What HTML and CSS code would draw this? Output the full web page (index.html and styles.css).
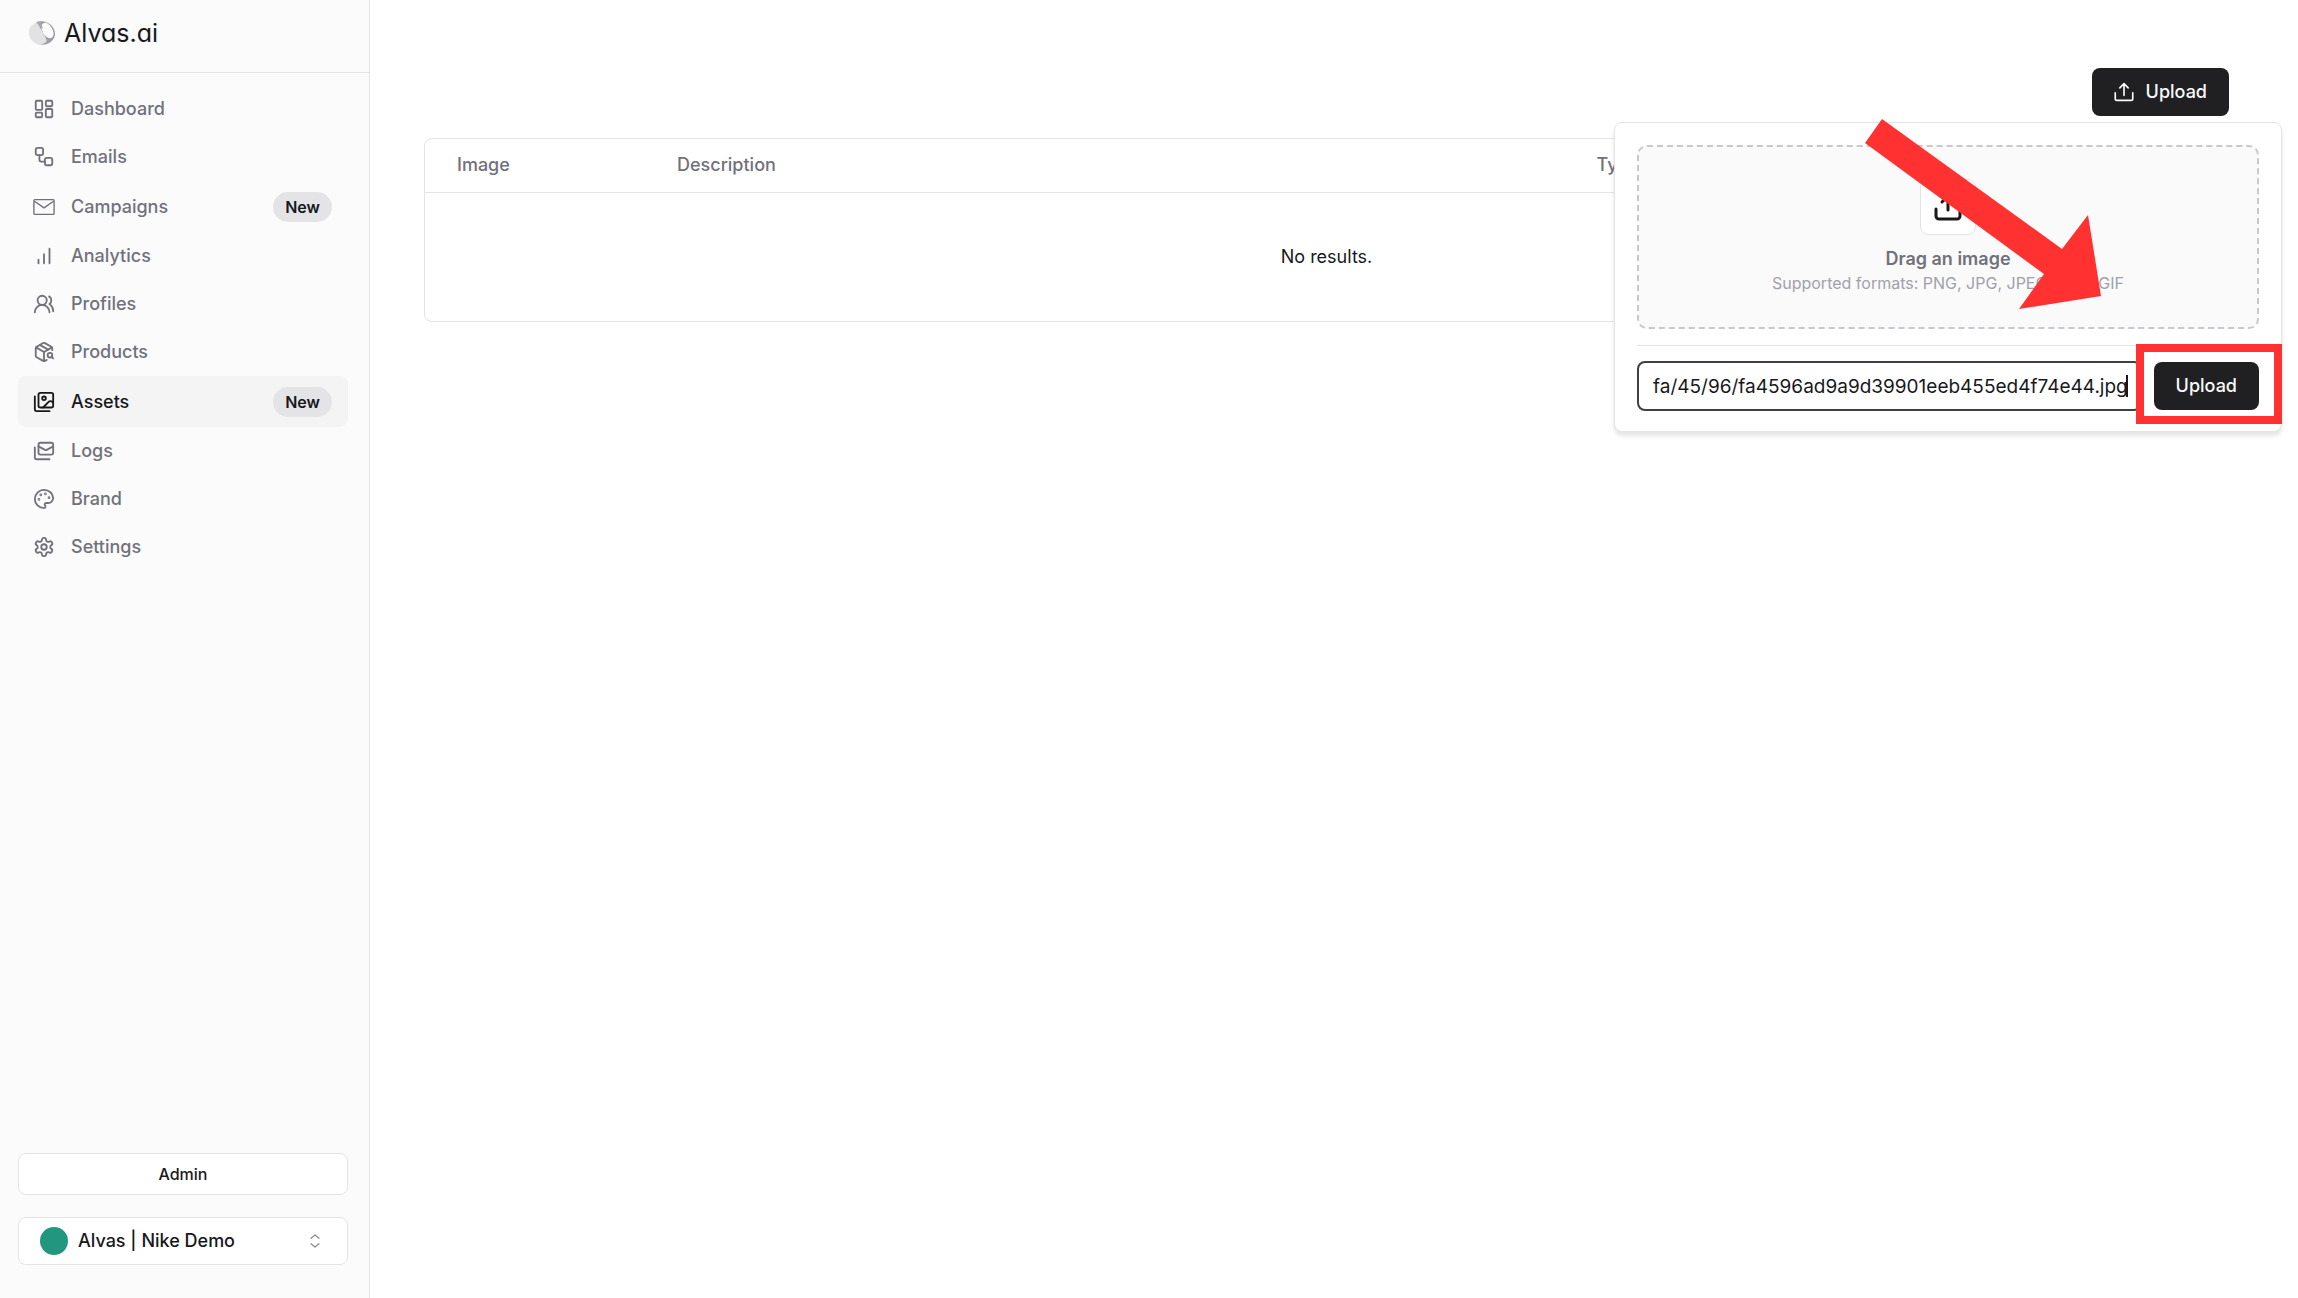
FILE: index.html
```html
<!DOCTYPE html>
<html lang="en">
<head>
<meta charset="utf-8">
<title>Assets - Alvas.ai</title>
<link rel="stylesheet" href="styles.css">
</head>

<body>
	<!-- sidebar -->
	<aside class="sidebar">
		<a class="brand" href="#">
			<svg class="brand-mark" viewBox="0 0 28 26">
				<ellipse cx="14" cy="13" rx="13" ry="12" fill="#e2e2e5"/>
				<path d="M9 1.800C17 -.500 26 5 27 13C27.500 20 20 25.800 11 24.600C14 24.600 17 23.500 18.500 21.500C20 19.500 12 9 9 1.800Z" fill="#9c9ca3"/>
				<ellipse cx="19.500" cy="10.500" rx="5" ry="8.500" transform="rotate(-30 19.500 10.500)" fill="#fbfbfb"/>
				<path d="M8 2l5 0 2 7z" fill="#a8a8af"/>
			</svg>
			<span class="brand-name">Alvas.ai</span>
		</a>

		<nav class="menu">
			<a class="item" href="#">
				<svg class="icon" viewBox="0 0 24 24"><rect x="3" y="3" width="7" height="10" rx="1"/><rect x="14" y="3" width="7" height="6" rx="1"/><rect x="14" y="12" width="7" height="9" rx="1"/><rect x="3" y="16" width="7" height="5" rx="1"/></svg>
				Dashboard
			</a>
			<a class="item" href="#">
				<svg class="icon" viewBox="0 0 24 24"><rect x="3" y="2" width="8" height="8" rx="2"/><rect x="13" y="13" width="8" height="8" rx="2"/><path d="M7 10v5a2 2 0 0 0 2 2h4"/></svg>
				Emails
			</a>
			<a class="item" href="#">
				<svg class="icon thin" viewBox="0 0 24 24"><rect x="1" y="4" width="22" height="16" rx="1"/><path d="M2 6l10 7 10-7"/></svg>
				Campaigns
				<span class="badge">New</span>
			</a>
			<a class="item" href="#">
				<svg class="icon" viewBox="0 0 24 24"><path d="M6 20v-4M12 20V10M18 20V4"/></svg>
				Analytics
			</a>
			<a class="item" href="#">
				<svg class="icon" viewBox="0 0 24 24"><path d="M18 21a8 8 0 0 0-16 0"/><circle cx="10" cy="8" r="5"/><path d="M22 20c0-3.370-2-6.500-4-8a5 5 0 0 0-.450-8.300"/></svg>
				Profiles
			</a>
			<a class="item" href="#">
				<svg class="icon" viewBox="0 0 24 24"><path d="M21 10V8a2 2 0 0 0-1-1.730l-7-4a2 2 0 0 0-2 0l-7 4A2 2 0 0 0 3 8v8a2 2 0 0 0 1 1.730l7 4a2 2 0 0 0 2 0l2-1.140"/><path d="M7.500 4.270l9 5.150"/><path d="M3.290 7L12 12l8.710-5"/><path d="M12 22V12"/><circle cx="18.500" cy="15.500" r="2.500"/><path d="M20.270 17.270L22 19"/></svg>
				Products
			</a>
			<a class="item active" href="#">
				<svg class="icon" viewBox="0 0 24 24"><rect x="6" y="2" width="16" height="16" rx="2"/><path d="M18 22H4a2 2 0 0 1-2-2V6"/><circle cx="12" cy="8" r="2"/><path d="M22 13l-1.300-1.300a2.400 2.400 0 0 0-3.400 0L11 18"/></svg>
				Assets
				<span class="badge">New</span>
			</a>
			<a class="item" href="#">
				<svg class="icon" viewBox="0 0 24 24"><rect x="6" y="3" width="16" height="13" rx="2"/><path d="M22 7l-7.100 3.780c-.570.300-1.230.300-1.800 0L6 7"/><path d="M2 8v11c0 1.100.900 2 2 2h14"/></svg>
				Logs
			</a>
			<a class="item" href="#">
				<svg class="icon" viewBox="0 0 24 24"><circle cx="13.500" cy="6.500" r=".500"/><circle cx="17.500" cy="10.500" r=".500"/><circle cx="8.500" cy="7.500" r=".500"/><circle cx="6.500" cy="12.500" r=".500"/><path d="M12 2C6.500 2 2 6.500 2 12s4.500 10 10 10c.926 0 1.648-.746 1.648-1.688 0-.437-.180-.835-.437-1.125-.290-.289-.438-.652-.438-1.125a1.640 1.640 0 0 1 1.668-1.668h1.996c3.051 0 5.555-2.503 5.555-5.554C21.965 6.012 17.461 2 12 2z"/></svg>
				Brand
			</a>
			<a class="item" href="#">
				<svg class="icon" viewBox="0 0 24 24"><path d="M12.220 2h-.440a2 2 0 0 0-2 2v.180a2 2 0 0 1-1 1.730l-.430.250a2 2 0 0 1-2 0l-.150-.080a2 2 0 0 0-2.730.730l-.220.380a2 2 0 0 0 .730 2.730l.150.100a2 2 0 0 1 1 1.720v.510a2 2 0 0 1-1 1.740l-.150.090a2 2 0 0 0-.730 2.730l.220.380a2 2 0 0 0 2.730.730l.150-.080a2 2 0 0 1 2 0l.430.250a2 2 0 0 1 1 1.730V20a2 2 0 0 0 2 2h.440a2 2 0 0 0 2-2v-.180a2 2 0 0 1 1-1.730l.430-.250a2 2 0 0 1 2 0l.150.080a2 2 0 0 0 2.730-.730l.220-.390a2 2 0 0 0-.730-2.730l-.150-.080a2 2 0 0 1-1-1.740v-.500a2 2 0 0 1 1-1.740l.150-.090a2 2 0 0 0 .730-2.730l-.220-.380a2 2 0 0 0-2.730-.730l-.150.080a2 2 0 0 1-2 0l-.430-.250a2 2 0 0 1-1-1.730V4a2 2 0 0 0-2-2z"/><circle cx="12" cy="12" r="3"/></svg>
				Settings
			</a>
		</nav>

		<div class="account">
			<button class="admin" type="button">Admin</button>
			<div class="workspace">
				<span class="dot"></span>
				<select aria-label="Workspace">
					<option>Alvas | Nike Demo</option>
				</select>
				<svg class="chevrons" viewBox="0 0 24 24"><path d="M6 8l6-5 6 5M6 16l6 5 6-5"/></svg>
			</div>
		</div>
	</aside>

	<!-- content -->
	<main class="content">
		<div class="toolbar">
			<div class="upload">
				<button class="btn" type="button">
					<svg class="btn-icon" viewBox="0 0 24 24"><path d="M12 16V2M7 7l5-5 5 5M1.500 13v7a2 2 0 0 0 2 2h17a2 2 0 0 0 2-2v-7"/></svg>
					Upload
				</button>

				<div class="popover">
					<div class="dropzone">
						<div class="drop-icon">
							<svg viewBox="0 0 28 28"><path d="M14 17V3M8 9l6-6 6 6M2 16v7a3 3 0 0 0 3 3h18a3 3 0 0 0 3-3v-7"/></svg>
						</div>
						<div class="drop-title">Drag an image</div>
						<div class="drop-hint">Supported formats: PNG, JPG, JPEG, SVG, GIF</div>
					</div>
					<form class="url-form">
						<div class="url-field">
							<input type="text" aria-label="Image URL" value="fa/45/96/fa4596ad9a9d39901eeb455ed4f74e44.jpg">
							<span class="caret"></span>
						</div>
						<button class="btn" type="button">Upload</button>
					</form>

					<div class="highlight"></div>
					<svg class="arrow" viewBox="0 0 236 190"><path d="M17 0L197 130L223 96L236 177L154 190L179 155L0 24Z"/></svg>
				</div>
			</div>
		</div>

		<div class="table-wrap">
			<table>
				<thead>
					<tr>
						<th class="col-image">Image</th>
						<th class="col-description">Description</th>
						<th>Type</th>
					</tr>
				</thead>
				<tbody>
					<tr>
						<td class="empty" colspan="3">No results.</td>
					</tr>
				</tbody>
			</table>
		</div>
	</main>
</body>
</html>
```
FILE: styles.css
```css
* {
	box-sizing: border-box;
}

body {
	margin: 0;
	min-height: 100vh;
	display: flex;
	font: 18px/24px Inter, "Liberation Sans", sans-serif;
	color: #18181b;
	background: #fff;
}

a {
	color: inherit;
	text-decoration: none;
}

button,
input,
select {
	font: inherit;
	color: inherit;
}

svg {
	display: block;
	flex: none;
	fill: none;
	stroke: currentColor;
	stroke-width: 2;
	stroke-linecap: round;
	stroke-linejoin: round;
}

.icon {
	width: 22px;
	height: 22px;
}

.icon.thin {
	stroke-width: 1.5;
}

/* sidebar */
.sidebar {
	flex: none;
	width: 370px;
	display: flex;
	flex-direction: column;
	background: #fbfbfb;
	border-right: 1px solid #e4e4e7;
}

.brand {
	height: 73px;
	padding: 0 28px 6px;
	display: flex;
	align-items: center;
	gap: 8px;
	border-bottom: 1px solid #e4e4e7;
}

.brand-mark {
	width: 28px;
	height: 26px;
	stroke: none;
}

.brand-name {
	font-size: 25px;
	font-feature-settings: "cv11";
}

.menu {
	flex: 1;
	padding: 12px 21px 12px 18px;
}

.item {
	display: flex;
	align-items: center;
	gap: 16px;
	min-height: 48px;
	padding: 10px 16px 10px 15px;
	border-radius: 8px;
	font-weight: 500;
	color: #71717a;
}

.item.active {
	color: #18181b;
	background: #f4f4f5;
}

.badge {
	margin: 0 0 0 auto;
	padding: 3px 12px;
	border-radius: 16px;
	font-size: 16px;
	font-weight: 600;
	color: #18181b;
	background: #e4e4e7;
}

.item:has(.badge) {
	min-height: 51px;
}

.account {
	display: flex;
	flex-direction: column;
	gap: 22px;
	padding: 0 21px 33px 18px;
}

.admin {
	height: 42px;
	font-size: 16px;
	font-weight: 500;
	background: #fff;
	border: 1px solid #e4e4e7;
	border-radius: 8px;
}

.workspace {
	height: 48px;
	padding: 0 24px 0 21px;
	display: flex;
	align-items: center;
	gap: 10px;
	background: #fff;
	border: 1px solid #e4e4e7;
	border-radius: 8px;
}

.dot {
	width: 28px;
	height: 28px;
	border-radius: 50%;
	background: #23967f;
}

.workspace select {
	flex: 1;
	appearance: none;
	padding: 0;
	border: 0;
	font-weight: 500;
	background: none;
}

.chevrons {
	width: 16px;
	height: 16px;
	color: #8e8e96;
}

/* content */
.content {
	flex: 1;
	min-width: 0;
	padding: 68px 69px 54px 54px;
}

.toolbar {
	display: flex;
	justify-content: flex-end;
	margin-bottom: 22px;
}

.upload {
	position: relative;
}

.btn {
	height: 48px;
	padding: 0 22px;
	display: flex;
	align-items: center;
	gap: 12px;
	border: 0;
	border-radius: 8px;
	font-weight: 500;
	color: #fafafa;
	background: #202022;
}

.btn-icon {
	width: 20px;
	height: 20px;
}

.table-wrap {
	border: 1px solid #e4e4e7;
	border-radius: 8px;
}

table {
	width: 100%;
	table-layout: fixed;
	border-collapse: collapse;
}

th {
	height: 53px;
	padding: 0 32px;
	border-bottom: 1px solid #e4e4e7;
	font-weight: 500;
	text-align: left;
	color: #71717a;
}

.col-image {
	width: 220px;
}

.col-description {
	width: 51%;
}

.empty {
	height: 129px;
	padding: 0;
	text-align: center;
}

/* upload popover */
.popover {
	position: absolute;
	top: 54px;
	right: -53px;
	width: 668px;
	padding: 22px 22px 20px;
	background: #fff;
	border: 1px solid #e4e4e7;
	border-radius: 8px;
	box-shadow: 0 4px 4px rgba(0, 0, 0, .1);
}

.dropzone {
	height: 184px;
	display: flex;
	flex-direction: column;
	align-items: center;
	justify-content: center;
	background: #fafafa;
	border: 2px dashed #c8c8cd;
	border-radius: 10px;
}

.drop-icon {
	width: 56px;
	height: 56px;
	padding: 13px;
	margin-bottom: 12px;
	background: #fff;
	border: 1px solid #e4e4e7;
	border-radius: 8px;
}

.drop-icon svg {
	width: 28px;
	height: 28px;
	stroke-width: 3;
}

.drop-title {
	font-weight: 600;
	color: #71717a;
}

.drop-hint {
	font-size: 16px;
	color: #a1a1aa;
}

.url-form {
	display: flex;
	align-items: center;
	gap: 12px;
	margin-top: 16px;
	padding-top: 15px;
	border-top: 1px solid #e4e4e7;
}

.url-field {
	flex: 1;
	position: relative;
}

.url-field input {
	display: block;
	width: 100%;
	height: 50px;
	padding: 0 14px;
	border: 2px solid #3f3f46;
	border-radius: 8px;
	font-size: 19px;
	background: #fff;
	outline: none;
}

.caret {
	position: absolute;
	top: 14px;
	right: 14px;
	width: 2px;
	height: 22px;
	background: #18181b;
}

/* callouts over the popover */
.highlight {
	position: absolute;
	right: -1px;
	bottom: 7px;
	width: 146px;
	height: 80px;
	border: 8px solid #ff3131;
}

.arrow {
	position: absolute;
	top: -4px;
	left: 250px;
	width: 236px;
	height: 190px;
	fill: #ff3131;
	stroke: none;
}
```
